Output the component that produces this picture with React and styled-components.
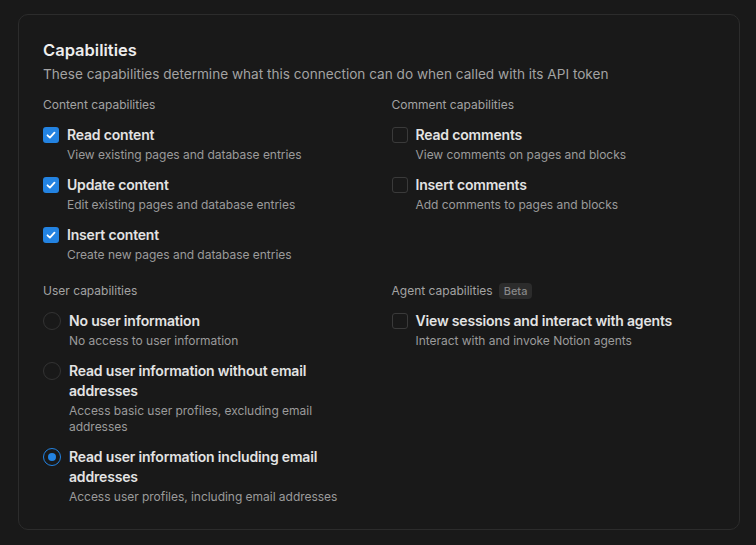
import React from 'react'
import styled, { createGlobalStyle } from 'styled-components'

const GlobalStyle = createGlobalStyle`
  html, body {
    margin: 0;
    padding: 0;
    background: #191919;
  }
  body {
    font-family: Inter, "Noto Sans", "Liberation Sans", sans-serif;
    -webkit-font-smoothing: antialiased;
  }
`

const Page = styled.div`
  padding: 14px 16px 16px 18px;
`

const Card = styled.section`
  border: 1px solid #2c2c2c;
  border-radius: 10px;
  padding: 23px 24px 24px 24px;
  background: #191919;
`

const Title = styled.h2`
  margin: 0;
  font-size: 16.5px;
  line-height: 24px;
  font-weight: 600;
  color: #ededed;
`

const Subtitle = styled.p`
  margin: 2px 0 0;
  font-size: 13.6px;
  line-height: 20px;
  color: #a3a3a3;
`

const Grid = styled.div`
  margin-top: 13px;
  display: grid;
  grid-template-columns: 1fr 1fr;
  column-gap: 25px;
  row-gap: 20px;
`

const Section = styled.div`
  display: flex;
  flex-direction: column;
`

const SectionHead = styled.div`
  display: flex;
  align-items: center;
  gap: 6px;
  height: 16px;
  margin-bottom: 12px;
`

const SectionLabel = styled.span`
  font-size: 12px;
  line-height: 16px;
  color: #a3a3a3;
`

const Badge = styled.span`
  font-size: 11px;
  line-height: 16px;
  padding: 0 5px;
  border-radius: 4px;
  background: #2c2c2c;
  color: #878787;
  font-weight: 500;
`

const List = styled.div`
  display: flex;
  flex-direction: column;
  gap: 12px;
`

const Item = styled.label`
  display: flex;
  align-items: flex-start;
  gap: 8px;
`

const Box = styled.span`
  flex: none;
  width: 16px;
  height: 16px;
  margin-top: 2px;
  box-sizing: border-box;
  border-radius: 3px;
  display: flex;
  align-items: center;
  justify-content: center;
  background: ${p => (p.$checked ? '#2383e2' : 'transparent')};
  border: ${p => (p.$checked ? 'none' : '1px solid #3a3a3a')};
`

const Radio = styled.span`
  flex: none;
  width: 18px;
  height: 18px;
  margin-top: 1px;
  box-sizing: border-box;
  border-radius: 50%;
  display: flex;
  align-items: center;
  justify-content: center;
  border: ${p => (p.$checked ? '1.5px solid #2383e2' : '1px solid #333333')};

  &::after {
    content: '';
    display: ${p => (p.$checked ? 'block' : 'none')};
    width: 8px;
    height: 8px;
    border-radius: 50%;
    background: #2383e2;
  }
`

const Text = styled.div`
  display: flex;
  flex-direction: column;
  max-width: 290px;
`

const Label = styled.span`
  font-size: 14px;
  line-height: 20px;
  font-weight: 600;
  letter-spacing: -0.18px;
  color: #e3e3e3;
`

const Desc = styled.span`
  margin-top: 2px;
  font-size: 12px;
  line-height: 16px;
  letter-spacing: -0.03px;
  color: #9b9b9b;
`

const Check = () => (
  <svg width="12" height="12" viewBox="0 0 12 12" fill="none">
    <path d="M2.5 6.3 L4.9 8.6 L9.5 3.6" stroke="#fff" strokeWidth="1.8" strokeLinecap="round" strokeLinejoin="round" />
  </svg>
)

const CheckItem = ({ checked, label, desc }) => (
  <Item>
    <Box $checked={checked}>{checked && <Check />}</Box>
    <Text>
      <Label>{label}</Label>
      <Desc>{desc}</Desc>
    </Text>
  </Item>
)

const RadioItem = ({ checked, label, desc }) => (
  <Item>
    <Radio $checked={checked} />
    <Text>
      <Label>{label}</Label>
      <Desc>{desc}</Desc>
    </Text>
  </Item>
)

const content = [
  { label: 'Read content', desc: 'View existing pages and database entries' },
  { label: 'Update content', desc: 'Edit existing pages and database entries' },
  { label: 'Insert content', desc: 'Create new pages and database entries' },
]

const comments = [
  { label: 'Read comments', desc: 'View comments on pages and blocks' },
  { label: 'Insert comments', desc: 'Add comments to pages and blocks' },
]

const users = [
  { label: 'No user information', desc: 'No access to user information' },
  { label: 'Read user information without email addresses', desc: 'Access basic user profiles, excluding email addresses' },
  { label: 'Read user information including email addresses', desc: 'Access user profiles, including email addresses', checked: true },
]

export default function App() {
  return (
    <>
      <GlobalStyle />
      <Page>
        <Card>
          <Title>Capabilities</Title>
          <Subtitle>These capabilities determine what this connection can do when called with its API token</Subtitle>
          <Grid>
            <Section>
              <SectionHead><SectionLabel>Content capabilities</SectionLabel></SectionHead>
              <List>
                {content.map(c => <CheckItem key={c.label} checked {...c} />)}
              </List>
            </Section>
            <Section>
              <SectionHead><SectionLabel>Comment capabilities</SectionLabel></SectionHead>
              <List>
                {comments.map(c => <CheckItem key={c.label} {...c} />)}
              </List>
            </Section>
            <Section>
              <SectionHead><SectionLabel>User capabilities</SectionLabel></SectionHead>
              <List>
                {users.map(u => <RadioItem key={u.label} {...u} />)}
              </List>
            </Section>
            <Section>
              <SectionHead>
                <SectionLabel>Agent capabilities</SectionLabel>
                <Badge>Beta</Badge>
              </SectionHead>
              <List>
                <CheckItem label="View sessions and interact with agents" desc="Interact with and invoke Notion agents" />
              </List>
            </Section>
          </Grid>
        </Card>
      </Page>
    </>
  )
}
